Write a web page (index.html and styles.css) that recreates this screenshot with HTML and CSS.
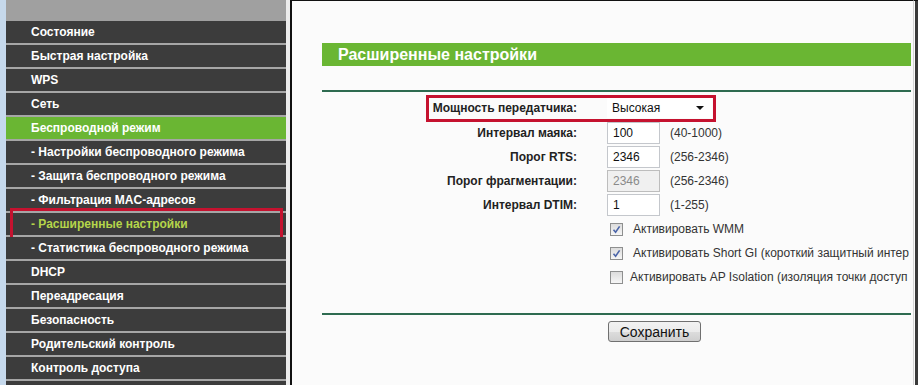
FILE: index.html
```html
<!DOCTYPE html>
<html lang="ru">
<head>
  <meta charset="UTF-8" />
  <title>Расширенные настройки</title>
  <link rel="stylesheet" href="styles.css">
</head>
<body>
  <div class="page">
    <div class="edge"></div>

    <!-- Left menu -->
    <nav class="menu">
      <div class="menu-top"></div>
      <a class="item">Состояние</a>
      <a class="item">Быстрая настройка</a>
      <a class="item">WPS</a>
      <a class="item">Сеть</a>
      <a class="item open">Беспроводной режим</a>
      <a class="item">- Настройки беспроводного режима</a>
      <a class="item">- Защита беспроводного режима</a>
      <a class="item">- Фильтрация MAC-адресов</a>
      <a class="item active">- Расширенные настройки</a>
      <a class="item">- Статистика беспроводного режима</a>
      <a class="item">DHCP</a>
      <a class="item">Переадресация</a>
      <a class="item">Безопасность</a>
      <a class="item">Родительский контроль</a>
      <a class="item">Контроль доступа</a>
      <a class="item"></a>
    </nav>

    <div class="gap"></div>

    <!-- Main content -->
    <main class="content">
      <div class="inner">
        <div class="title">Расширенные настройки</div>
        <div class="rule"></div>

        <div class="form">
          <div class="row power">
            <span class="label">Мощность передатчика:</span>
            <span class="select">Высокая <span class="arrow"></span></span>
          </div>
          <div class="row">
            <span class="label">Интервал маяка:</span>
            <span class="field">100</span>
            <span class="hint">(40-1000)</span>
          </div>
          <div class="row">
            <span class="label">Порог RTS:</span>
            <span class="field">2346</span>
            <span class="hint">(256-2346)</span>
          </div>
          <div class="row">
            <span class="label">Порог фрагментации:</span>
            <span class="field disabled">2346</span>
            <span class="hint">(256-2346)</span>
          </div>
          <div class="row">
            <span class="label">Интервал DTIM:</span>
            <span class="field">1</span>
            <span class="hint">(1-255)</span>
          </div>

          <div class="check-row">
            <span class="box">
              <svg width="9" height="9" viewBox="0 0 9 9"><path d="M1.5 4.8 L3.6 7.2 L7.6 1.4" fill="none" stroke="#4a64a8" stroke-width="1.6"/></svg>
            </span>
            <span class="check-text">Активировать WMM</span>
          </div>
          <div class="check-row">
            <span class="box">
              <svg width="9" height="9" viewBox="0 0 9 9"><path d="M1.5 4.8 L3.6 7.2 L7.6 1.4" fill="none" stroke="#4a64a8" stroke-width="1.6"/></svg>
            </span>
            <span class="check-text">Активировать Short GI (короткий защитный интер</span>
          </div>
          <div class="check-row">
            <span class="box"></span>
            <span class="check-text tight">Активировать AP Isolation (изоляция точки доступ</span>
          </div>
        </div>

        <div class="rule second"></div>
        <div class="actions">
          <button class="save">Сохранить</button>
        </div>
      </div>
    </main>

    <div class="right-edge"></div>
  </div>
</body>
</html>
```

FILE: styles.css
```css
body {
  margin: 0;
  height: 385px;
  overflow: hidden;
  background: #fbfbfb;
  font-family: "Liberation Sans", Arial, sans-serif;
  font-size: 12px;
}

.page {
  display: flex;
  height: 385px;
}

.edge {
  width: 6px;
  flex: none;
  background: #c6d9ec;
}

/* Menu */
.menu {
  width: 280px;
  flex: none;
  background: #a6a6a6;
  display: flex;
  flex-direction: column;
}
.menu-top {
  height: 21px;
  flex: none;
  background: #a0a0a0;
}
.item {
  position: relative;
  flex: none;
  height: 22px;
  line-height: 22px;
  margin-bottom: 2px;
  padding-left: 25px;
  background: #3c3c3c;
  color: #fff;
  font-weight: bold;
  white-space: nowrap;
}
.item.open {
  background: #6ab633;
}
.item.active {
  color: #b5d54a;
}
.item.active::after {
  content: "";
  position: absolute;
  left: 4px;
  right: 3px;
  top: -5px;
  bottom: -5px;
  border: 3px solid #c5122f;
}

.gap {
  width: 4px;
  flex: none;
  background: #ececec;
}

/* Content */
.content {
  width: 621px;
  flex: none;
  border-left: 2px solid #111;
  border-top: 1px solid #111;
  background: #fbfbfb;
  overflow: hidden;
}
.inner {
  width: 589px;
  padding-left: 30px;
  overflow: hidden;
}
.title {
  margin-top: 42px;
  height: 23px;
  line-height: 23px;
  padding-left: 16px;
  background: #6ab633;
  color: #fff;
  font-size: 16px;
  font-weight: bold;
}
.rule {
  margin-top: 24px;
  height: 2px;
  background: #2e6b50;
}
.rule.second {
  margin-top: 24px;
}

.form {
  margin-top: 3px;
  white-space: nowrap;
}
.row {
  position: relative;
  display: flex;
  align-items: center;
  height: 24px;
}
.row.power {
  height: 26px;
}
.row.power::after {
  content: "";
  position: absolute;
  left: 104px;
  width: 284px;
  top: 0;
  bottom: -1px;
  border: 3px solid #c5122f;
}
.label {
  width: 255px;
  text-align: right;
  font-weight: bold;
  color: #222;
}
.select {
  position: relative;
  margin-left: 30px;
  width: 100px;
  height: 20px;
  line-height: 20px;
  padding-left: 5px;
  background: #fff;
  color: #111;
}
.arrow {
  position: absolute;
  right: 8px;
  top: 8px;
  border-left: 4px solid transparent;
  border-right: 4px solid transparent;
  border-top: 4px solid #111;
}
.field {
  margin-left: 30px;
  width: 46px;
  height: 20px;
  line-height: 20px;
  padding-left: 5px;
  border: 1px solid #c4c7cc;
  background: #fff;
  color: #111;
}
.field.disabled {
  background: #f0f0f0;
  color: #8a8a8a;
  border-color: #bdbdbd;
}
.hint {
  margin-left: 10px;
  color: #333;
}

.check-row {
  display: flex;
  align-items: center;
  height: 24px;
  padding-left: 288px;
}
.box {
  width: 11px;
  height: 11px;
  flex: none;
  border: 1px solid #8e8f8f;
  background: linear-gradient(#dcdcdc, #f6f6f6);
  display: flex;
  align-items: center;
  justify-content: center;
}
.check-text {
  margin-left: 10px;
  color: #333;
}
.check-text.tight {
  margin-left: 7px;
}

.actions {
  padding-left: 286px;
  margin-top: 6px;
}
.save {
  width: 93px;
  height: 21px;
  padding: 0;
  border: 1px solid #707070;
  border-radius: 3px;
  background: linear-gradient(#f2f2f2 0%, #ebebeb 50%, #dddddd 51%, #cfcfcf 100%);
  font-family: "Liberation Sans", Arial, sans-serif;
  font-size: 14px;
  color: #111;
}

.right-edge {
  flex: 1;
  border-left: 1px solid #d4d4d4;
  border-top: 1px solid #111;
  background: linear-gradient(to right, #fbfbfb 1px, #3a3a3a 1px);
}
```
